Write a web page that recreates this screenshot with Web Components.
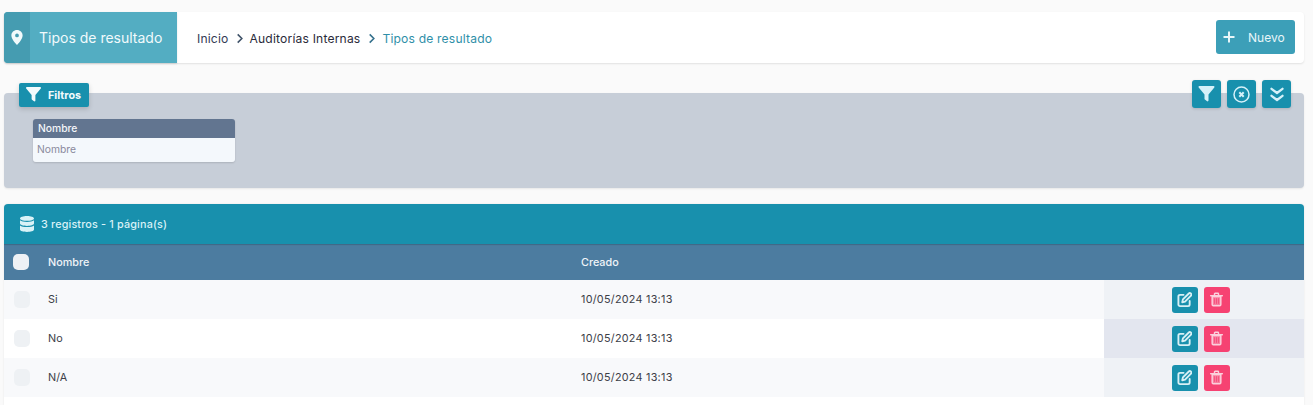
<!DOCTYPE html>
<html lang="es">
<head>
<meta charset="UTF-8">
<title>Tipos de resultado</title>
<style>
    html, body { margin: 0; height: 405px; overflow: hidden; background: #fafafa; }
    body { font-family: Inter, "Liberation Sans", sans-serif; padding: 12px 9px 0 4px; box-sizing: border-box; }
</style>
</head>
<body>
    <page-header title-text="Tipos de resultado">
        <bread-crumb></bread-crumb>
    </page-header>
    <filter-panel></filter-panel>
    <result-table></result-table>

    <script>
        const ICONS = {
            pin: '<path fill="currentColor" fill-rule="evenodd" d="M6 0C2.700 0 0 2.600 0 5.900 0 9.600 4.200 14.300 6 16c1.800-1.700 6-6.400 6-10.100C12 2.600 9.300 0 6 0zm0 7.800a2 2 0 1 1 0-4 2 2 0 0 1 0 4z"/>',
            funnel: '<path fill="currentColor" d="M.9 0h14.200c.8 0 1.200.9.700 1.500L10 8.400v6.200c0 .7-.8 1.100-1.400.7L6.400 13.600c-.3-.2-.4-.5-.4-.7V8.400L.2 1.500C-.3.900.1 0 .9 0z"/>',
            edit: '<path fill="none" stroke="currentColor" stroke-width="2" stroke-linecap="round" stroke-linejoin="round" d="M7 3H3.200A1.700 1.700 0 0 0 1.500 4.700v8.600A1.700 1.700 0 0 0 3.200 15h8.600a1.700 1.700 0 0 0 1.700-1.700V9.500"/><path fill="none" stroke="currentColor" stroke-width="2" stroke-linejoin="round" d="M12.600 1.600a1.500 1.500 0 0 1 2.100 0l.2.2a1.500 1.500 0 0 1 0 2.100L8.600 10.200l-3 .7.7-3z"/>',
            trash: '<path fill="currentColor" fill-opacity=".45" stroke="currentColor" stroke-width="1.700" stroke-linejoin="round" d="M2.500 4.500h10v9.400a1.300 1.300 0 0 1-1.300 1.300H3.800a1.300 1.300 0 0 1-1.300-1.300z"/><path fill="none" stroke="currentColor" stroke-width="1.700" stroke-linecap="round" d="M.8 3.600h13.400M5.200 3.300V1.600c0-.4.3-.7.7-.7h3.200c.4 0 .7.3.7.7v1.700"/><path stroke="#f64272" stroke-width=".9" d="M5.300 6.500v6.500M7.500 6.500v6.500M9.700 6.500v6.500"/>'
        };

        // cabecera con el titulo, las migas y el boton Nuevo
        class PageHeader extends HTMLElement {
            constructor() {
                super();
                const shadow = this.attachShadow({ mode: "open" });
                shadow.innerHTML = `
                    <style>
                        :host { display: flex; height: 51px; background: #fff; border-radius: 4px; box-shadow: 0 1px 2px rgba(0,0,0,.1); align-items: stretch; }
                        .title { display: flex; width: 173px; background: #53adc2; color: #f1fafc; border-radius: 4px 0 0 4px; overflow: hidden; box-shadow: 0 1px 2px rgba(0,0,0,.12); }
                        .pin { width: 26px; background: #459cb1; display: flex; align-items: center; justify-content: center; }
                        .pin svg { width: 12px; height: 15px; }
                        .name { font-size: 14px; line-height: 51px; margin-left: 9px; white-space: nowrap; }
                        .crumbs { flex: 1; display: flex; align-items: center; padding-left: 20px; }
                        .new { align-self: center; margin-right: 9px; width: 79px; height: 34px; background: #3c9fb8; color: #e8f6f9; border-radius: 3px; display: flex; align-items: center; font-size: 12px; box-sizing: border-box; padding-left: 7px; margin-top: -1px; }
                        .new svg { width: 12px; height: 12px; margin-right: 13px; }
                    </style>
                    <div class="title">
                        <div class="pin"><svg viewBox="0 0 12 16">${ICONS.pin}</svg></div>
                        <div class="name">${this.getAttribute("title-text")}</div>
                    </div>
                    <div class="crumbs"><slot></slot></div>
                    <div class="new">
                        <svg viewBox="0 0 12 12"><path fill="none" stroke="currentColor" stroke-width="2" d="M6 .5v11M.5 6h11"/></svg>
                        Nuevo
                    </div>`;
            }
        }

        class BreadCrumb extends HTMLElement {
            constructor() {
                super();
                const chevron = '<svg viewBox="0 0 8 12"><path fill="none" stroke="currentColor" stroke-width="1.700" d="M1.500 1.500 6 6l-4.500 4.500"/></svg>';
                const shadow = this.attachShadow({ mode: "open" });
                shadow.innerHTML = `
                    <style>
                        :host { display: flex; align-items: center; font-size: 12.1px; color: #333a54; letter-spacing: .18px; margin-top: 1px; }
                        svg { width: 8px; height: 11px; margin: 0 6px 0 7px; }
                        .dark { color: #2a2b3a; }
                        .sep { color: #3f5268; display: flex; }
                        .sep.last { color: #34708c; margin-left: 1px; }
                        .now { color: #2f8fa8; }
                    </style>
                    <span>Inicio</span><span class="sep">${chevron}</span>
                    <span class="dark">Auditorías Internas</span><span class="sep last">${chevron}</span>
                    <span class="now">Tipos de resultado</span>`;
            }
        }

        // panel gris de filtros
        class FilterPanel extends HTMLElement {
            constructor() {
                super();
                const shadow = this.attachShadow({ mode: "open" });
                shadow.innerHTML = `
                    <style>
                        :host { display: block; position: relative; height: 95px; margin-top: 30px; background: #c7ced8; border-radius: 4px; box-shadow: 0 1px 2px rgba(0,0,0,.08); }
                        .tab { position: absolute; left: 15px; top: -10px; width: 70px; height: 24px; background: #1890ad; color: #f2fbfd; border-radius: 2px; display: flex; align-items: center; font-size: 10.8px; font-weight: 700; box-sizing: border-box; padding-left: 7px; box-shadow: 0 2px 5px rgba(0,0,0,.16); }
                        .tab svg { width: 15px; height: 15px; margin-right: 7px; margin-top: -1px; }
                        .tools { position: absolute; right: 13px; top: -13px; display: flex; gap: 6px; }
                        .tool { width: 29px; height: 28px; background: #1890ad; color: #d5f1f9; border-radius: 3px; display: flex; align-items: center; justify-content: center; box-shadow: 0 1px 3px rgba(0,0,0,.14); }
                        .field { position: absolute; left: 29px; top: 26px; width: 202px; border-radius: 3px; overflow: hidden; box-shadow: 0 1px 2px rgba(0,0,0,.14); }
                        .label { height: 19px; line-height: 19px; background: #627590; color: #f4f6f9; font-size: 10.3px; font-weight: 500; padding-left: 5px; }
                        .input { height: 24px; line-height: 23px; background: #f4f8fc; color: #8a8a9c; font-size: 10.3px; padding-left: 4px; }
                    </style>
                    <div class="tab"><svg viewBox="0 0 16 16">${ICONS.funnel}</svg>Filtros</div>
                    <div class="tools">
                        <div class="tool"><svg width="17" height="16" viewBox="0 0 16 16">${ICONS.funnel}</svg></div>
                        <div class="tool"><svg width="17" height="17" viewBox="0 0 17 17"><circle cx="8.500" cy="8.500" r="7.500" fill="none" stroke="currentColor" stroke-width="1.500"/><path fill="none" stroke="currentColor" stroke-width="2" d="M6.300 6.300l4.400 4.400M10.700 6.300l-4.400 4.400"/></svg></div>
                        <div class="tool"><svg width="14" height="15" viewBox="0 0 14 15"><path fill="none" stroke="currentColor" stroke-width="2.300" stroke-linecap="round" stroke-linejoin="round" d="M1.500 1.800 7 6l5.500-4.200M1.500 8.800 7 13l5.500-4.200"/></svg></div>
                    </div>
                    <div class="field">
                        <div class="label">Nombre</div>
                        <div class="input">Nombre</div>
                    </div>`;
            }
        }

        // una fila de la tabla
        class ResultRow extends HTMLElement {
            constructor() {
                super();
                const shadow = this.attachShadow({ mode: "open" });
                shadow.innerHTML = `
                    <style>
                        :host { display: grid; grid-template-columns: 44px 533px 523px 1fr; height: 39px; align-items: center; font-size: 10.8px; color: #3c4048; background: var(--row, #f8f9fb); }
                        .check { width: 16px; height: 17px; margin-left: 10px; border-radius: 5px; background: #eef1f4; }
                        .date { letter-spacing: .26px; }
                        .actions { height: 100%; background: var(--cell, #eff2f6); display: flex; align-items: center; justify-content: center; gap: 6px; padding-right: 7px; }
                        .btn { width: 26px; height: 26px; border-radius: 3px; display: flex; align-items: center; justify-content: center; background: #1890ad; color: #d8f0f5; }
                        .btn.del { background: #f64272; color: #fbd0dc; }
                    </style>
                    <div class="check"></div>
                    <div><slot></slot></div>
                    <div class="date">${this.getAttribute("created")}</div>
                    <div class="actions">
                        <div class="btn"><svg width="15" height="15" viewBox="0 0 16 16">${ICONS.edit}</svg></div>
                        <div class="btn del"><svg width="13" height="15" viewBox="0 0 15 16">${ICONS.trash}</svg></div>
                    </div>`;
            }
        }

        class ResultTable extends HTMLElement {
            constructor() {
                super();
                const shadow = this.attachShadow({ mode: "open" });
                shadow.innerHTML = `
                    <style>
                        :host { display: block; margin-top: 16px; height: 201px; background: #fff; border-radius: 4px 4px 0 0; overflow: hidden; box-shadow: 0 0 2px rgba(0,0,0,.1); }
                        .top { height: 40px; background: #1890ad; color: #d9f2f7; display: flex; align-items: center; font-size: 10.8px; font-weight: 500; letter-spacing: .17px; padding-left: 16px; box-sizing: border-box; box-shadow: 0 1px 1px rgba(0,0,0,.15); position: relative; }
                        .top svg { width: 14px; height: 16px; margin-right: 7px; }
                        .head { height: 36px; background: #4c7ca0; color: #f0f4f8; display: grid; grid-template-columns: 44px 533px 1fr; align-items: center; font-size: 10.8px; font-weight: 500; }
                        .check { width: 16px; height: 16px; margin-left: 9px; border-radius: 5px; background: #eef1f5; }
                        .alt { --row: #fff; --cell: #e3e6ef; }
                    </style>
                    <div class="top">
                        <svg viewBox="0 0 14 16"><path fill="currentColor" d="M7 0c3.900 0 7 1 7 2.400S10.900 4.800 7 4.800 0 3.800 0 2.400 3.100 0 7 0zM0 4.300c1.400 1.100 4 1.600 7 1.600s5.600-.5 7-1.600v3.200c0 1.400-3.100 2.400-7 2.400S0 8.900 0 7.500zM0 9.500c1.400 1.100 4 1.600 7 1.600s5.600-.5 7-1.600v4.100C14 15 10.900 16 7 16s-7-1-7-2.400z"/></svg>
                        3 registros - 1 página(s)
                    </div>
                    <div class="head"><div class="check"></div><div>Nombre</div><div>Creado</div></div>
                    <result-row created="10/05/2024 13:13">Si</result-row>
                    <result-row class="alt" created="10/05/2024 13:13">No</result-row>
                    <result-row created="10/05/2024 13:13">N/A</result-row>`;
            }
        }

        customElements.define("page-header", PageHeader);
        customElements.define("bread-crumb", BreadCrumb);
        customElements.define("filter-panel", FilterPanel);
        customElements.define("result-row", ResultRow);
        customElements.define("result-table", ResultTable);
    </script>
</body>
</html>
